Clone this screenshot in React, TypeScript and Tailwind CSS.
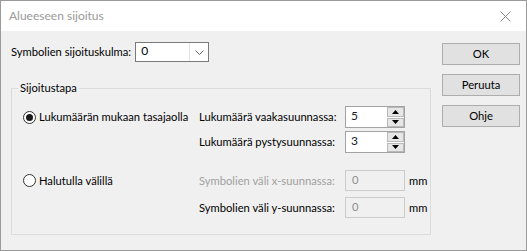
import React from "react";

const font = { fontFamily: 'Lato, "Liberation Sans", sans-serif' };

function Spinner({ value }: { value: string }) {
  return (
    <div className="flex h-[22px] w-[60px] border border-[#a3a3a3] bg-white">
      <div className="flex-1 pl-[5px] pt-[1px] text-[12px] leading-[16px] text-[#1a1a2e]">{value}</div>
      <div className="flex w-[17px] flex-col gap-[1px] bg-white">
        <div className="flex flex-1 items-center justify-center border border-[#b9b9b9] bg-[#e6e6e6]">
          <svg width="7" height="4" viewBox="0 0 7 4"><path d="M0 4 L3.5 0 L7 4Z" fill="#000" /></svg>
        </div>
        <div className="flex flex-1 items-center justify-center border border-[#b9b9b9] bg-[#e6e6e6]">
          <svg width="7" height="4" viewBox="0 0 7 4"><path d="M0 0 L3.5 4 L7 0Z" fill="#000" /></svg>
        </div>
      </div>
    </div>
  );
}

function Disabled({ value }: { value: string }) {
  return (
    <div className="h-[21px] w-[60px] border border-[#cccccc] bg-[#f0f0f0] pl-[6px] pt-[1px] leading-[16px] text-[#8d8d8d]">
      {value}
    </div>
  );
}

function Radio({ checked, label }: { checked?: boolean; label: string }) {
  return (
    <div className="flex items-center gap-[3px]">
      <div className="flex h-[13px] w-[13px] items-center justify-center rounded-full border border-[#333] bg-white">
        {checked && <div className="h-[7px] w-[7px] rounded-full bg-[#1a1a1a]" />}
      </div>
      <span>{label}</span>
    </div>
  );
}

function Btn({ label }: { label: string }) {
  return (
    <div className="flex h-[22px] w-[78px] items-center justify-center border border-[#adadad] bg-[#e1e1e1]">
      {label}
    </div>
  );
}

export default function App() {
  return (
    <div
      style={font}
      className="flex h-[251px] w-[527px] flex-col whitespace-nowrap border-x border-b border-t border-[#9a9a9a] text-[11.2px] leading-[16px] text-black"
    >
      {/* title bar */}
      <div className="flex h-[30px] shrink-0 items-center justify-between bg-white pl-[8px] pr-[15px]">
        <span className="text-[12px] text-[#9a9a9a]">Alueeseen sijoitus</span>
        <svg width="11" height="11" viewBox="0 0 11 11">
          <path d="M0.5 0.5 L10.5 10.5 M10.5 0.5 L0.5 10.5" stroke="#8a8a8a" strokeWidth="1" />
        </svg>
      </div>

      <div className="flex flex-1 bg-[#f0f0f0]">
        {/* left */}
        <div className="flex w-[430px] flex-col pl-[10px] pt-[11px]">
          <div className="flex items-center gap-[4px]">
            <span>Symbolien sijoituskulma:</span>
            <div className="flex h-[20px] w-[74px] border border-[#7a7a7a] bg-white">
              <div className="flex-1 pl-[5px] text-[12px] leading-[16px]">0</div>
              <div className="flex w-[19px] items-center justify-center border-l border-[#e3e3e3]">
                <svg width="9" height="5" viewBox="0 0 9 5">
                  <path d="M0.5 0.5 L4.5 4.5 L8.5 0.5" stroke="#606060" fill="none" strokeWidth="1" />
                </svg>
              </div>
            </div>
          </div>

          <div className="relative mt-[26px] border border-[#dcdcdc] pb-[16px] pl-[11px] pt-[17px]">
            <span className="absolute -top-[9px] left-[6px] bg-[#f0f0f0] px-[2px]">Sijoitustapa</span>
            <div className="grid grid-cols-[176px_146px_60px_auto] items-center">
              <Radio checked label="Lukumäärän mukaan tasajaolla" />
              <span>Lukumäärä vaakasuunnassa:</span>
              <Spinner value="5" />
              <span />

              <span className="mt-[3px]" />
              <span className="mt-[3px]">Lukumäärä pystysuunnassa:</span>
              <div className="mt-[3px]"><Spinner value="3" /></div>
              <span className="mt-[3px]" />

              <div className="mt-[17px]"><Radio label="Halutulla välillä" /></div>
              <span className="mt-[17px] text-[#a0a0a0]">Symbolien väli x-suunnassa:</span>
              <div className="mt-[17px]"><Disabled value="0" /></div>
              <span className="mt-[17px] pl-[4px]">mm</span>

              <span className="mt-[6px]" />
              <span className="mt-[6px]">Symbolien väli y-suunnassa:</span>
              <div className="mt-[6px]"><Disabled value="0" /></div>
              <span className="mt-[6px] pl-[4px]">mm</span>
            </div>
          </div>
        </div>

        {/* right buttons */}
        <div className="flex flex-col gap-[9px] pl-[11px] pt-[12px]">
          <Btn label="OK" />
          <Btn label="Peruuta" />
          <Btn label="Ohje" />
        </div>
      </div>
    </div>
  );
}
